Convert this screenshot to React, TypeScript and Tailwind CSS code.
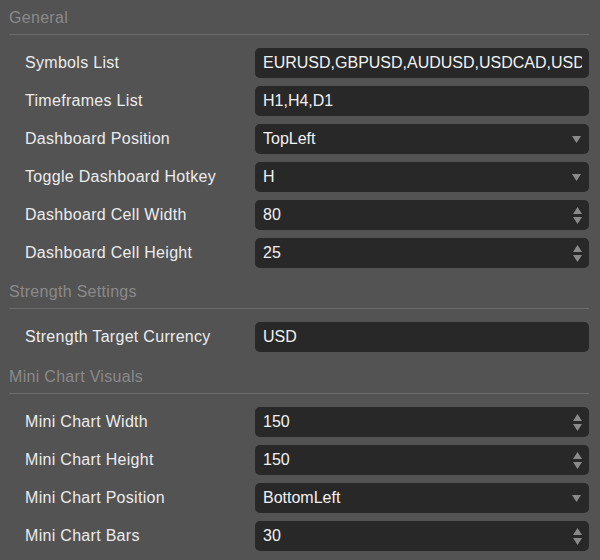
import React from "react";

type Field = { label: string; value: string; kind: "text" | "select" | "number" };

const sections: { title: string; fields: Field[] }[] = [
  {
    title: "General",
    fields: [
      { label: "Symbols List", value: "EURUSD,GBPUSD,AUDUSD,USDCAD,USDJPY", kind: "text" },
      { label: "Timeframes List", value: "H1,H4,D1", kind: "text" },
      { label: "Dashboard Position", value: "TopLeft", kind: "select" },
      { label: "Toggle Dashboard Hotkey", value: "H", kind: "select" },
      { label: "Dashboard Cell Width", value: "80", kind: "number" },
      { label: "Dashboard Cell Height", value: "25", kind: "number" },
    ],
  },
  {
    title: "Strength Settings",
    fields: [{ label: "Strength Target Currency", value: "USD", kind: "text" }],
  },
  {
    title: "Mini Chart Visuals",
    fields: [
      { label: "Mini Chart Width", value: "150", kind: "number" },
      { label: "Mini Chart Height", value: "150", kind: "number" },
      { label: "Mini Chart Position", value: "BottomLeft", kind: "select" },
      { label: "Mini Chart Bars", value: "30", kind: "number" },
    ],
  },
];

const DropArrow = () => (
  <svg width="9" height="7" viewBox="0 0 9 7" className="shrink-0">
    <path d="M0 0 H9 L4.5 7 Z" fill="#8a8a8a" />
  </svg>
);

const Spinner = () => (
  <svg width="9" height="17" viewBox="0 0 9 17" className="shrink-0">
    <path d="M4.5 0 L9 7 H0 Z" fill="#8a8a8a" />
    <path d="M0 10 H9 L4.5 17 Z" fill="#8a8a8a" />
  </svg>
);

const Row: React.FC<{ field: Field }> = ({ field }) => (
  <div className="flex items-center h-[30px]">
    <div className="w-[246px] pl-[16px] text-[#ececec] whitespace-nowrap tracking-[0.3px]">{field.label}</div>
    <div className="flex-1 min-w-0 h-full flex items-center rounded-[5px] bg-[#282828] pl-[8px] pr-[7px] gap-2">
      <div className="flex-1 min-w-0 overflow-hidden whitespace-nowrap text-[#f2f2f2]">{field.value}</div>
      {field.kind === "select" && (
        <div className="pr-[1px]">
          <DropArrow />
        </div>
      )}
      {field.kind === "number" && <Spinner />}
    </div>
  </div>
);

export default function App() {
  return (
    <div className="w-[600px] h-[560px] bg-[#535353] px-[9px] pt-[8px] overflow-hidden text-[16px] leading-[20px] font-['Liberation_Sans',Arial,sans-serif]">
      {sections.map((s, i) => (
        <div key={s.title} className={i === 0 ? "" : i === 1 ? "mt-[14px]" : "mt-[15px]"}>
          <div className="h-[20px] text-[#8a8a8a] tracking-[0.3px]">{s.title}</div>
          <div className="mt-[6px] h-px bg-[#6c6c6c] w-[580px]" />
          <div className="mt-[13px] flex flex-col gap-[8px] w-[580px]">
            {s.fields.map((f) => (
              <Row key={f.label} field={f} />
            ))}
          </div>
        </div>
      ))}
    </div>
  );
}
